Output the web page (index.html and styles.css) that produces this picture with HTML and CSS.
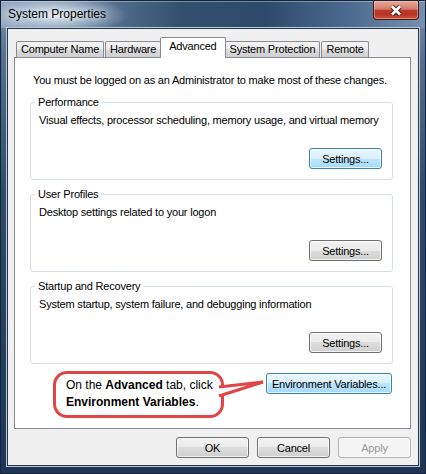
FILE: index.html
```html
<!DOCTYPE html>
<html lang="en">

<head>
    <meta charset="UTF-8">
    <meta name="viewport" content="width=device-width, initial-scale=1.0">
    <title>System Properties</title>
    <link rel="stylesheet" href="styles.css">
</head>

<body>
    <div class="window">
        <div class="titlebar">
            <span class="title">System Properties</span>
            <button class="close" aria-label="Close">
                <svg width="12" height="11" viewBox="0 0 12 11">
                    <path d="M2 1.5 L10 9.5 M10 1.5 L2 9.5" stroke="#4b2420" stroke-width="4.6" fill="none" />
                    <path d="M2 1.5 L10 9.5 M10 1.5 L2 9.5" stroke="#ffffff" stroke-width="2.6" fill="none" />
                </svg>
            </button>
        </div>

        <div class="client">
            <div class="tabs">
                <div class="tab">Computer Name</div>
                <div class="tab">Hardware</div>
                <div class="tab active">Advanced</div>
                <div class="tab">System Protection</div>
                <div class="tab">Remote</div>
            </div>

            <div class="panel">
                <p class="note">You must be logged on as an Administrator to make most of these changes.</p>

                <fieldset class="group">
                    <legend>Performance</legend>
                    <p>Visual effects, processor scheduling, memory usage, and virtual memory</p>
                    <button class="btn hot">Settings...</button>
                </fieldset>

                <fieldset class="group">
                    <legend>User Profiles</legend>
                    <p>Desktop settings related to your logon</p>
                    <button class="btn">Settings...</button>
                </fieldset>

                <fieldset class="group">
                    <legend>Startup and Recovery</legend>
                    <p>System startup, system failure, and debugging information</p>
                    <button class="btn">Settings...</button>
                </fieldset>

                <div class="env-row">
                    <div class="callout">
                        On the <b>Advanced</b> tab, click<br>
                        <b>Environment Variables</b>.
                        <!-- pointer towards the button -->
                        <svg class="pointer" width="56" height="26" viewBox="0 0 56 26">
                            <path d="M6 11 L50 6 L6 20" fill="#ffffff" stroke="#e04646" stroke-width="3" stroke-linejoin="miter" />
                        </svg>
                    </div>
                    <button class="btn hot env">Environment Variables...</button>
                </div>
            </div>

            <div class="footer">
                <button class="btn">OK</button>
                <button class="btn">Cancel</button>
                <button class="btn" disabled>Apply</button>
            </div>
        </div>
    </div>
</body>

</html>
```

FILE: styles.css
```css
* {
    box-sizing: border-box;
}

body {
    margin: 0;
    background: #1c3354;
    font-family: "Liberation Sans", Arial, sans-serif;
    font-size: 11px;
    letter-spacing: -0.2px;
    color: #000;
}

.window {
    width: 426px;
    height: 474px;
    border: 1px solid #14243a;
    padding: 0 6px 7px;
    display: flex;
    flex-direction: column;
    background: linear-gradient(to bottom, #7a91ab 0%, #56718f 12%, #2f4b6c 40%, #1e3555 100%);
}

/* title bar */
.window .titlebar {
    height: 27px;
    margin: 0 -6px;
    padding-left: 7px;
    display: flex;
    justify-content: space-between;
    align-items: flex-start;
    background:
        radial-gradient(ellipse 72px 20px at 55px 14px, rgba(232, 239, 246, .95), rgba(232, 239, 246, 0)),
        linear-gradient(to right, #8ca2bb 0%, #5f7b9b 20%, #34506f 42%, #2d4a6c 62%, #4b6a8f 82%, #7690ae 100%);
    box-shadow: inset 0 1px rgba(255, 255, 255, .35);
}

.window .titlebar .title {
    font-size: 12px;
    letter-spacing: 0;
    line-height: 27px;
    text-shadow: 0 0 6px #fff;
}

.window .titlebar .close {
    width: 46px;
    height: 19px;
    margin-right: 6px;
    padding: 0;
    border: 1px solid #4a1c16;
    border-top: 0;
    border-radius: 0 0 4px 4px;
    display: flex;
    justify-content: center;
    align-items: center;
    background: linear-gradient(#e9a99a 0%, #d67b69 45%, #c0392b 52%, #b53426 75%, #d0553f 100%);
    box-shadow: inset 0 0 0 1px rgba(255, 200, 190, .45);
}

/* client area */
.client {
    flex: 1;
    min-height: 0;
    border: 1px solid #23364d;
    box-shadow: 0 0 0 1px #b9c9da;
    background: #f0f0f0;
    padding: 8px 7px 7px 6px;
    display: flex;
    flex-direction: column;
}

.tabs {
    display: flex;
    align-items: flex-end;
    gap: 1px;
    height: 20px;
    padding-left: 2px;
}

.tabs .tab {
    height: 16px;
    padding: 0 4px;
    line-height: 15px;
    border: 1px solid #898c95;
    border-bottom: 0;
    border-radius: 2px 2px 0 0;
    background: linear-gradient(#f3f3f3, #ebebeb 50%, #dddddd 50%, #cfcfcf);
}

.tabs .tab.active {
    position: relative;
    z-index: 1;
    height: 21px;
    margin: 0 -2px -1px;
    padding: 1px 8px 0;
    background: #fff;
}

.panel {
    flex: 1;
    min-height: 0;
    border: 1px solid #898c95;
    background: #fff;
    padding: 15px 17px 0 15px;
}

.panel .note {
    margin: 0 0 7px 3px;
    line-height: 15px;
    white-space: nowrap;
}

.group {
    margin: 0 0 7px;
    min-width: 0;
    border: 1px solid #d5dfe5;
    border-radius: 3px;
    padding: 0 10px 10px 4px;
}

.group legend {
    padding: 0 3px;
    line-height: 15px;
}

.group p {
    margin: 3px 0 0 4px;
    line-height: 15px;
    white-space: nowrap;
}

.group .btn {
    display: block;
    margin: 20px 0 0 auto;
}

/* buttons */
.btn {
    width: 73px;
    height: 21px;
    padding: 0;
    border: 1px solid #707070;
    border-radius: 3px;
    font-family: inherit;
    font-size: 11px;
    letter-spacing: -0.2px;
    color: #000;
    background: linear-gradient(#f2f2f2, #ebebeb 50%, #dddddd 50%, #cfcfcf);
    box-shadow: inset 0 0 0 1px rgba(255, 255, 255, .7);
}

.btn.hot {
    border-color: #3c7fb1;
    background: linear-gradient(#eaf6fd, #d9f0fc 50%, #bee6fd 50%, #a7d9f5);
}

.btn:disabled {
    border-color: #adb2b5;
    background: #f4f4f4;
    color: #9a9a9a;
}

/* callout row */
.env-row {
    display: flex;
    align-items: flex-start;
    margin-top: 6px;
    padding-left: 23px;
}

.callout {
    position: relative;
    width: 171px;
    height: 47px;
    border: 3px solid #e04646;
    border-radius: 14px;
    padding: 3px 0 0 10px;
    background: #fff;
    font-size: 12px;
    letter-spacing: 0;
    line-height: 17px;
}

.callout .pointer {
    position: absolute;
    left: 157px;
    top: 2px;
    overflow: visible;
}

.env-row .env {
    width: 126px;
    margin: 2px 1px 0 auto;
}

.footer {
    display: flex;
    justify-content: flex-end;
    gap: 8px;
    margin-top: 8px;
}
```
